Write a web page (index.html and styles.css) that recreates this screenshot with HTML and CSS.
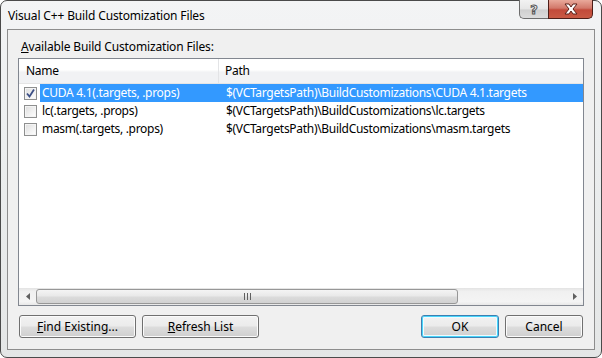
FILE: index.html
```html
<!DOCTYPE html>
<html>
<head>
<meta charset="utf-8">
<link rel="stylesheet" href="styles.css">
</head>
<body>
<div class="window">
  <div class="titlebar">
    <div class="title">Visual C++ Build Customization Files</div>
    <div class="capbtns">
      <div class="cap help"><span>?</span></div>
      <div class="cap close">
        <svg width="18" height="12" viewBox="0 0 18 12">
          <path d="M3 1 H7 L9 4 L11 1 H15 L11 6 L15 11 H11 L9 8 L7 11 H3 L7 6 Z" fill="#fff" stroke="#5b2019" stroke-width="1"/>
        </svg>
      </div>
    </div>
  </div>
  <div class="client">
    <div class="label"><u>A</u>vailable Build Customization Files:</div>
    <div class="list">
      <div class="header">
        <div class="hcol hname">Name</div>
        <div class="hcol hpath">Path</div>
      </div>
      <div class="rows">
        <div class="row selected">
          <div class="chkcell"><span class="chk checked"><svg width="11" height="11" viewBox="0 0 11 11"><path d="M2 5.5 L4.5 8.5 L9 1.5" fill="none" stroke="#3c4f86" stroke-width="1.8"/></svg></span></div>
          <div class="cname">CUDA 4.1(.targets, .props)</div>
          <div class="cpath">$(VCTargetsPath)\BuildCustomizations\CUDA 4.1.targets</div>
        </div>
        <div class="row">
          <div class="chkcell"><span class="chk"></span></div>
          <div class="cname">lc(.targets, .props)</div>
          <div class="cpath">$(VCTargetsPath)\BuildCustomizations\lc.targets</div>
        </div>
        <div class="row">
          <div class="chkcell"><span class="chk"></span></div>
          <div class="cname">masm(.targets, .props)</div>
          <div class="cpath">$(VCTargetsPath)\BuildCustomizations\masm.targets</div>
        </div>
      </div>
      <div class="hscroll">
        <div class="arrow"><svg width="4" height="7" viewBox="0 0 4 7"><path d="M4 0 L0 3.5 L4 7 Z" fill="#606060"/></svg></div>
        <div class="track">
          <div class="thumb"><span class="grip"></span></div>
        </div>
        <div class="arrow"><svg width="4" height="7" viewBox="0 0 4 7"><path d="M0 0 L4 3.5 L0 7 Z" fill="#606060"/></svg></div>
      </div>
    </div>
    <div class="buttons">
      <div class="btn wide"><u>F</u>ind Existing...</div>
      <div class="btn wide"><u>R</u>efresh List</div>
      <div class="spacer"></div>
      <div class="btn ok default">OK</div>
      <div class="btn ok">Cancel</div>
    </div>
  </div>
</div>
</body>
</html>
```

FILE: styles.css
```css
html, body {
  margin: 0;
  padding: 0;
  width: 602px;
  height: 358px;
  overflow: hidden;
  background: #ffffff;
}
body {
  font-family: "Noto Sans", "Open Sans", sans-serif;
  font-size: 12px;
  color: #000;
}
.window {
  box-sizing: border-box;
  width: 602px;
  height: 358px;
  border: 1px solid #4a4a4a;
  border-radius: 7px;
  background: linear-gradient(180deg, #f3f4f5 0%, #eceeef 40%, #e4e6e6 100%);
  display: flex;
  flex-direction: column;
}
.titlebar {
  height: 28px;
  display: flex;
  align-items: flex-start;
  padding-left: 7px;
}
.title {
  margin-top: 7px;
  line-height: 16px;
  color: #000;
  letter-spacing: -0.15px;
}
.capbtns {
  margin-left: auto;
  margin-right: 8px;
  display: flex;
  margin-top: -1px;
}
.cap {
  height: 19px;
  box-sizing: border-box;
  border: 1px solid #6d6d6d;
  border-top: none;
  display: flex;
  align-items: center;
  justify-content: center;
}
.help {
  width: 29px;
  border-radius: 0 0 0 5px;
  border-right: none;
  background: linear-gradient(180deg, #f2f2f2 0%, #e6e6e6 50%, #cfcfcf 55%, #dcdcdc 100%);
  color: #4b4b4b;
  font-family: "DejaVu Sans", sans-serif;
  font-size: 13px;
  font-weight: bold;
}
.help span {
  color: #f6f6f6;
  -webkit-text-stroke: 1px #555;
}
.close {
  width: 45px;
  border-radius: 0 0 5px 0;
  border-color: #4e1e18;
  background: linear-gradient(180deg, #e9a99b 0%, #d2786a 45%, #c24a3a 55%, #c95a44 100%);
}
.client {
  flex: 1;
  margin: 0 6px 7px 6px;
  border: 1px solid #8d8d8d;
  background: #f0f0f0;
  display: flex;
  flex-direction: column;
  padding: 9px 10px 11px 10px;
}
.label {
  line-height: 16px;
  margin-left: 3px;
  margin-bottom: 3px;
  letter-spacing: -0.15px;
}
.list {
  flex: 1;
  border: 1px solid #828790;
  background: #ffffff;
  display: flex;
  flex-direction: column;
  letter-spacing: -0.3px;
}
.header {
  height: 24px;
  display: flex;
  background: linear-gradient(180deg, #ffffff 0%, #ffffff 45%, #f1f2f4 55%, #f1f2f4 100%);
  border-bottom: 1px solid #e5e5e5;
}
.hcol {
  line-height: 24px;
  padding-left: 7px;
  box-sizing: border-box;
}
.hname {
  width: 200px;
  border-right: 1px solid #e3e4e6;
}
.hpath {
  flex: 1;
  padding-left: 6px;
}
.rows {
  flex: 1;
}
.row {
  display: flex;
  height: 18px;
  line-height: 18px;
}
.chkcell {
  width: 21px;
  display: flex;
  align-items: center;
  padding-left: 5px;
  box-sizing: border-box;
}
.chk {
  width: 13px;
  height: 13px;
  box-sizing: border-box;
  border: 1px solid #8e8f8f;
  background: linear-gradient(135deg, #dcdcdc 0%, #f2f2f2 60%, #ffffff 100%);
  box-shadow: inset 0 0 0 1px #f4f4f4;
  display: flex;
  align-items: center;
  justify-content: center;
}
.cname {
  width: 179px;
  padding-left: 2px;
  box-sizing: border-box;
  white-space: nowrap;
}
.cpath {
  flex: 1;
  padding-left: 7px;
  white-space: nowrap;
}
.selected .cname,
.selected .cpath {
  background: #3399ff;
  color: #ffffff;
}
.hscroll {
  height: 17px;
  display: flex;
  background: linear-gradient(180deg, #e3e3e3 0%, #f0f0f0 20%, #f4f4f4 80%, #e8e8e8 100%);
}
.arrow {
  width: 17px;
  display: flex;
  align-items: center;
  justify-content: center;
}
.track {
  flex: 1;
  display: flex;
  align-items: center;
}
.thumb {
  width: 422px;
  height: 15px;
  box-sizing: border-box;
  border: 1px solid #979797;
  border-radius: 3px;
  background: linear-gradient(180deg, #f4f4f4 0%, #e9e9e9 45%, #dbdbdb 55%, #d2d2d2 100%);
  display: flex;
  align-items: center;
  justify-content: center;
}
.grip {
  width: 7px;
  height: 7px;
  background: linear-gradient(90deg, #606060 0 1px, transparent 1px 3px, #606060 3px 4px, transparent 4px 6px, #606060 6px 7px);
}
.buttons {
  display: flex;
  margin-top: 9px;
  gap: 6px;
  padding-left: 1px;
  padding-right: 1px;
}
.spacer {
  flex: 1;
}
.btn {
  height: 23px;
  box-sizing: border-box;
  border: 1px solid #707070;
  border-radius: 3px;
  background: linear-gradient(180deg, #f2f2f2 0%, #ebebeb 48%, #dddddd 52%, #cfcfcf 100%);
  box-shadow: inset 0 0 0 1px #fbfbfb;
  display: flex;
  align-items: center;
  justify-content: center;
  line-height: 16px;
}
.wide {
  width: 117px;
}
.ok {
  width: 78px;
}
.default {
  border-color: #3c7fb1;
  box-shadow: inset 0 0 0 1px #48d5fb, inset 0 0 0 2px #eefbff;
}
```
